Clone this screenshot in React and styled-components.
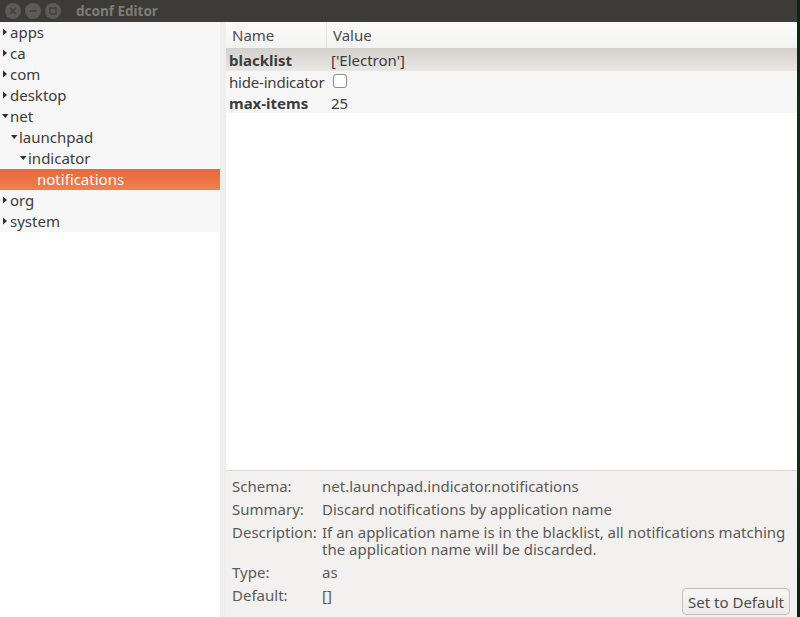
import React from "react";
import styled, { createGlobalStyle } from "styled-components";

const Global = createGlobalStyle`
  *, *::before, *::after {
    box-sizing: border-box;
  }
  html, body {
    margin: 0;
    padding: 0;
    background: #0e2a13;
    font-family: "Noto Sans", "Open Sans", sans-serif;
  }
`;

const Screen = styled.div`
  width: 800px;
  height: 617px;
  display: flex;
  overflow: hidden;
`;

const Window = styled.div`
  width: 797px;
  height: 617px;
  display: flex;
  flex-direction: column;
  background: #f2f1f0;
`;

const Desktop = styled.div`
  flex: 1;
  background: linear-gradient(180deg, #0c2610 0%, #143a1c 40%, #0b2410 100%);
`;

const TitleBar = styled.div`
  height: 22px;
  flex-shrink: 0;
  background: #3c3b37;
  display: flex;
  align-items: center;
  padding-left: 5px;
  gap: 4px;
`;

const WinButton = styled.div`
  width: 16px;
  height: 16px;
  border-radius: 50%;
  background: #5d5b56;
  display: flex;
  align-items: center;
  justify-content: center;
`;

const Title = styled.div`
  margin-left: 11px;
  color: #7f7c77;
  font-size: 13.5px;
  font-weight: 700;
`;

const Body = styled.div`
  flex: 1;
  display: flex;
  min-height: 0;
`;

const TreePane = styled.div`
  width: 220px;
  flex-shrink: 0;
  background: #ffffff;
`;

const TreeRow = styled.div`
  height: 21px;
  display: flex;
  align-items: center;
  padding-left: ${({ depth }) => 1 + depth * 9}px;
  padding-bottom: 1px;
  font-size: 15px;
  color: ${({ selected }) => (selected ? "#ffffff" : "#3c3c3c")};
  background: ${({ selected }) =>
    selected ? "linear-gradient(180deg, #e9673b 0%, #f0804f 100%)" : "#f7f7f7"};
`;

const Arrow = styled.span`
  width: 9px;
  flex-shrink: 0;
  display: flex;
  align-items: center;
  padding-left: 1px;
`;

const Handle = styled.div`
  width: 6px;
  flex-shrink: 0;
  background: #efeeec;
`;

const RightPane = styled.div`
  flex: 1;
  display: flex;
  flex-direction: column;
  min-width: 0;
`;

const Header = styled.div`
  height: 27px;
  flex-shrink: 0;
  display: flex;
  background: linear-gradient(180deg, #fbfbfa 0%, #f3f3f1 100%);
  border-bottom: 1px solid #d3d0cb;
`;

const HeadCell = styled.div`
  width: ${({ w }) => (w ? `${w}px` : "auto")};
  flex: ${({ w }) => (w ? "none" : 1)};
  display: flex;
  align-items: center;
  padding-left: 6px;
  font-size: 15px;
  color: #4c4c4c;
  border-right: ${({ w }) => (w ? "1px solid #e3e1dd" : "none")};
`;

const List = styled.div`
  flex: 1;
  background: #ffffff;
  display: flex;
  flex-direction: column;
`;

const KeyRow = styled.div`
  height: ${({ selected }) => (selected ? 22 : 21)}px;
  display: flex;
  align-items: center;
  font-size: 15px;
  color: #3c3c3c;
  background: ${({ selected }) =>
    selected ? "linear-gradient(180deg, #d5d2cd 0%, #e9e7e4 100%)" : "#f6f6f6"};
`;

const KeyName = styled.div`
  width: 102px;
  flex-shrink: 0;
  padding-left: 3px;
  font-weight: ${({ bold }) => (bold ? 700 : 400)};
  letter-spacing: ${({ bold }) => (bold ? 0 : -0.2)}px;
  white-space: nowrap;
`;

const KeyValue = styled.div`
  padding-left: 3px;
  display: flex;
  align-items: center;
`;

const Check = styled.span`
  width: 14px;
  height: 14px;
  margin-left: 2px;
  border: 1px solid #8e8c88;
  border-radius: 3px;
  background: #ffffff;
  margin-top: -1px;
`;

const Info = styled.div`
  height: 147px;
  flex-shrink: 0;
  border-top: 1px solid #dad8d5;
  background: #f2f1f0;
  padding: 7px 7px 0 6px;
`;

const InfoGrid = styled.div`
  display: grid;
  grid-template-columns: 90px 1fr;
  row-gap: 6px;
  font-size: 15px;
  line-height: 17px;
  color: #5c5955;
`;

const Label = styled.div`
  white-space: nowrap;
`;

const Value = styled.div`
  display: flex;
  justify-content: space-between;
  align-items: flex-start;
  padding-right: ${({ wide }) => (wide ? 0 : 20)}px;
`;

const Button = styled.button`
  height: 27px;
  margin-top: 1px;
  padding: 0 5px;
  font-family: inherit;
  font-size: 15px;
  color: #4c4c4c;
  background: linear-gradient(180deg, #f7f6f5 0%, #ecebe9 100%);
  border: 1px solid #c2bfba;
  border-radius: 4px;
  white-space: nowrap;
`;

const Tri = ({ open }) => (
  <svg width="7" height="8" viewBox="0 0 7 8">
    {open ? (
      <path d="M0 2 L6.5 2 L3.25 6 Z" fill="#2e2e2e" />
    ) : (
      <path d="M1 0.5 L5 4 L1 7.5 Z" fill="#2e2e2e" />
    )}
  </svg>
);

const tree = [
  { name: "apps", depth: 0, arrow: "closed" },
  { name: "ca", depth: 0, arrow: "closed" },
  { name: "com", depth: 0, arrow: "closed" },
  { name: "desktop", depth: 0, arrow: "closed" },
  { name: "net", depth: 0, arrow: "open" },
  { name: "launchpad", depth: 1, arrow: "open" },
  { name: "indicator", depth: 2, arrow: "open" },
  { name: "notifications", depth: 3, selected: true },
  { name: "org", depth: 0, arrow: "closed" },
  { name: "system", depth: 0, arrow: "closed" },
];

export default function App() {
  return (
    <>
      <Global />
      <Screen>
        <Window>
          <TitleBar>
            <WinButton>
              <svg width="8" height="8" viewBox="0 0 8 8">
                <path d="M1 1 L7 7 M7 1 L1 7" stroke="#3c3b37" strokeWidth="1.4" />
              </svg>
            </WinButton>
            <WinButton>
              <svg width="8" height="8" viewBox="0 0 8 8">
                <path d="M0.5 4 L7.5 4" stroke="#3c3b37" strokeWidth="1.4" />
              </svg>
            </WinButton>
            <WinButton>
              <svg width="8" height="8" viewBox="0 0 8 8">
                <rect x="1" y="1" width="6" height="6" fill="none" stroke="#3c3b37" strokeWidth="1.2" />
              </svg>
            </WinButton>
            <Title>dconf Editor</Title>
          </TitleBar>
          <Body>
            <TreePane>
              {tree.map((n) => (
                <TreeRow key={n.name} depth={n.depth} selected={n.selected}>
                  <Arrow>{n.arrow && <Tri open={n.arrow === "open"} />}</Arrow>
                  {n.name}
                </TreeRow>
              ))}
            </TreePane>
            <Handle />
            <RightPane>
              <Header>
                <HeadCell w={101}>Name</HeadCell>
                <HeadCell>Value</HeadCell>
              </Header>
              <List>
                <KeyRow selected>
                  <KeyName bold>blacklist</KeyName>
                  <KeyValue>['Electron']</KeyValue>
                </KeyRow>
                <KeyRow>
                  <KeyName>hide-indicator</KeyName>
                  <KeyValue>
                    <Check />
                  </KeyValue>
                </KeyRow>
                <KeyRow>
                  <KeyName bold>max-items</KeyName>
                  <KeyValue>25</KeyValue>
                </KeyRow>
              </List>
              <Info>
                <InfoGrid>
                  <Label>Schema:</Label>
                  <Value>net.launchpad.indicator.notifications</Value>
                  <Label>Summary:</Label>
                  <Value>Discard notifications by application name</Value>
                  <Label>Description:</Label>
                  <Value wide>
                    If an application name is in the blacklist, all notifications matching the
                    application name will be discarded.
                  </Value>
                  <Label>Type:</Label>
                  <Value>as</Value>
                  <Label>Default:</Label>
                  <Value wide>
                    []
                    <Button>Set to Default</Button>
                  </Value>
                </InfoGrid>
              </Info>
            </RightPane>
          </Body>
        </Window>
        <Desktop />
      </Screen>
    </>
  );
}
